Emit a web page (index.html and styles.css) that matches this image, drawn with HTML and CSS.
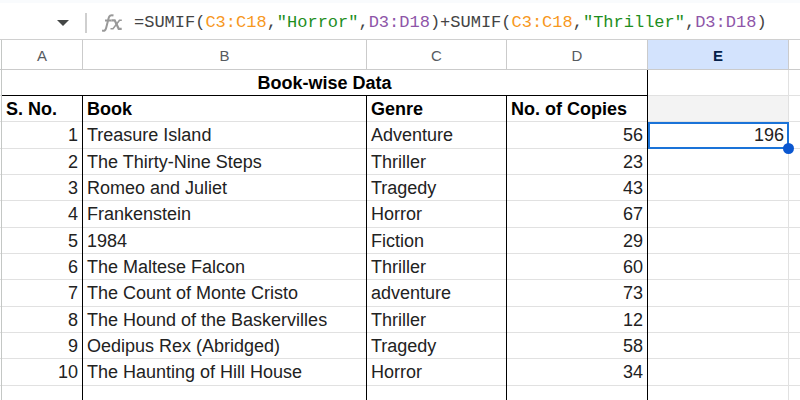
FILE: index.html
```html
<!DOCTYPE html>
<html lang="en">
<head>
    <meta charset="utf-8">
    <title>Book-wise Data</title>
    <link rel="stylesheet" href="styles.css">
</head>
<body>
    <div class="formula-bar">
        <button type="button" class="name-box" aria-label="Name box">
            <svg width="12" height="6" viewBox="0 0 12 6"><path d="M0 0h12L6 6z" fill="#444746"/></svg>
        </button>
        <svg class="fx" width="20" height="18" viewBox="0 0 20 18" fill="none" stroke="#999" stroke-width="2" aria-hidden="true">
            <path d="M0 16.500c2.500.8 3.600-.3 4.200-2.800L6.600 4.300C7.200 1.800 8.600.8 11.500 1.500M3 6.500h6.500"/>
            <path d="M9.500 6.300h3.200l4 8.500h3" stroke-width="2.200"/>
            <path d="M19.800 6.300h-2.300l-6.500 8.500H8.500" stroke-width="1.600"/>
        </svg>
        <div class="formula" role="textbox" aria-label="Formula" contenteditable="true" spellcheck="false">=SUMIF(<span class="range-c">C3:C18</span>,<span class="string">"Horror"</span>,<span class="range-d">D3:D18</span>)+SUMIF(<span class="range-c">C3:C18</span>,<span class="string">"Thriller"</span>,<span class="range-d">D3:D18</span>)</div>
    </div>

    <table class="sheet">
        <colgroup>
            <col class="gutter">
            <col class="col-a">
            <col class="col-b">
            <col class="col-c">
            <col class="col-d">
            <col class="col-e">
            <col>
        </colgroup>
        <thead>
            <tr><td></td><th>A</th><th>B</th><th>C</th><th>D</th><th class="active">E</th><td></td></tr>
        </thead>
        <tbody>
            <tr class="title"><td></td><th colspan="4">Book-wise Data</th><td class="plain"></td><td></td></tr>
            <tr class="labels"><td></td><th>S. No.</th><th>Book</th><th>Genre</th><th>No. of Copies</th><td class="shaded"></td><td></td></tr>
            <tr><td></td><td class="num">1</td><td>Treasure Island</td><td>Adventure</td><td class="num">56</td><td class="num selected">196<span class="handle"></span></td><td></td></tr>
            <tr><td></td><td class="num">2</td><td>The Thirty-Nine Steps</td><td>Thriller</td><td class="num">23</td><td></td><td></td></tr>
            <tr><td></td><td class="num">3</td><td>Romeo and Juliet</td><td>Tragedy</td><td class="num">43</td><td></td><td></td></tr>
            <tr><td></td><td class="num">4</td><td>Frankenstein</td><td>Horror</td><td class="num">67</td><td></td><td></td></tr>
            <tr><td></td><td class="num">5</td><td>1984</td><td>Fiction</td><td class="num">29</td><td></td><td></td></tr>
            <tr><td></td><td class="num">6</td><td>The Maltese Falcon</td><td>Thriller</td><td class="num">60</td><td></td><td></td></tr>
            <tr><td></td><td class="num">7</td><td>The Count of Monte Cristo</td><td>adventure</td><td class="num">73</td><td></td><td></td></tr>
            <tr><td></td><td class="num">8</td><td>The Hound of the Baskervilles</td><td>Thriller</td><td class="num">12</td><td></td><td></td></tr>
            <tr><td></td><td class="num">9</td><td>Oedipus Rex (Abridged)</td><td>Tragedy</td><td class="num">58</td><td></td><td></td></tr>
            <tr><td></td><td class="num">10</td><td>The Haunting of Hill House</td><td>Horror</td><td class="num">34</td><td></td><td></td></tr>
            <tr><td></td><td></td><td></td><td></td><td></td><td></td><td></td></tr>
        </tbody>
    </table>
</body>
</html>
```

FILE: styles.css
```css
* {
    box-sizing: border-box;
}
body {
    margin: 0;
    overflow: hidden;
    background-color: #fff;
    color: #222;
    font-family: "Liberation Sans", Arial, sans-serif;
    font-size: 18px;
}

/* formula bar */
.formula-bar {
    display: flex;
    align-items: center;
    height: 40px;
    padding-top: 3px;
    border-top: 3px solid #f9fbfd;
    border-bottom: 1px solid #d0d0d0;
}
.name-box {
    display: flex;
    align-items: center;
    justify-content: flex-end;
    width: 87px;
    height: 20px;
    padding: 0 16px 0 0;
    border: none;
    border-right: 2px solid #cfcfcf;
    background: none;
}
.fx {
    margin: 0 12px 0 15px;
}
.formula {
    flex: 1;
    color: #444;
    font: 17px/24px "Liberation Mono", monospace;
    white-space: nowrap;
    outline: none;
}
.range-c {
    color: #f7981d;
}
.range-d {
    color: #8e55a8;
}
.string {
    color: #1e8e1e;
}

/* grid: vertical rules are borders, horizontal rules are inset shadows */
.sheet {
    width: 100%;
    table-layout: fixed;
    border-collapse: separate;
    border-spacing: 0;
}
.gutter {
    width: 2px;
}
.col-a {
    width: 81px;
}
.col-b {
    width: 284px;
}
.col-c {
    width: 140px;
}
.col-d,
.col-e {
    width: 141px;
}
.sheet th,
.sheet td {
    height: 26px;
    padding: 0 4px;
    border-right: 1px solid #e1e1e1;
    box-shadow: inset 0 -1px #e1e1e1;
    line-height: 25px;
    text-align: left;
    white-space: nowrap;
}
.sheet tbody tr:nth-child(3n) td {
    height: 27px;
}
.sheet thead th,
.sheet thead td {
    height: 30px;
    border-color: #cbcbcb;
    box-shadow: inset 0 -1px #cbcbcb;
    color: #575b5f;
    font-size: 15px;
    font-weight: normal;
    text-align: center;
}
.sheet thead .active {
    background-color: #d3e3fd;
    color: #041e49;
    font-weight: bold;
}
.sheet tbody th,
.sheet tbody td:not(.plain):nth-child(n+2):nth-child(-n+5) {
    border-right-color: #000;
}
.sheet tbody th {
    color: #000;
}
.sheet .title th {
    box-shadow: inset 0 -1px #000;
    text-align: center;
}
.sheet td:first-child {
    padding: 0;
    border-right-color: #c4c7c5;
}
.sheet td:last-child {
    padding: 0;
    border-right: none;
}
.sheet .shaded {
    background-color: #f3f3f3;
}
.sheet .num {
    text-align: right;
}
.sheet .selected {
    position: relative;
    border-right: none;
    padding-right: 5px;
    box-shadow: inset 0 0 0 2px #1a73d8;
}
.handle {
    position: absolute;
    right: -5px;
    bottom: -5px;
    width: 11px;
    height: 11px;
    border-radius: 50%;
    background-color: #0b57d0;
}
```
